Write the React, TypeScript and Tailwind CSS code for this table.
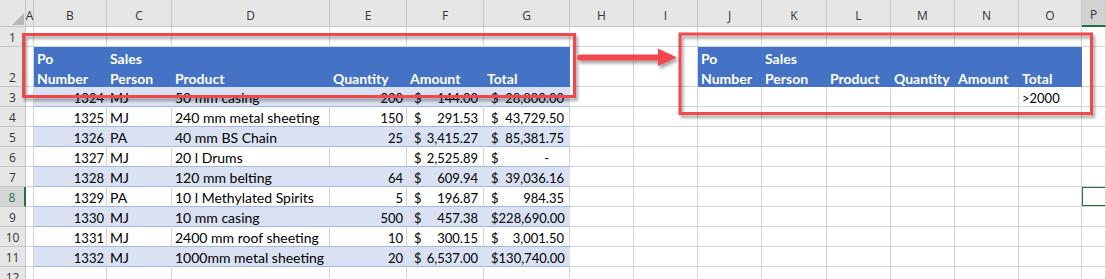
import React from "react";

// Spreadsheet columns (row-header column comes first in the grid)
const COLS = ["A", "B", "C", "D", "E", "F", "G", "H", "I", "J", "K", "L", "M", "N", "O", "P"];
const ROWS = [1, 2, 3, 4, 5, 6, 7, 8, 9, 10, 11, 12];

type Order = {
  po: number;
  rep: string;
  product: string;
  qty: number | null;
  amount: string;
  total: string | null;
};

const orders: Order[] = [
  { po: 1324, rep: "MJ", product: "50 mm casing", qty: 200, amount: "144.00", total: "28,800.00" },
  { po: 1325, rep: "MJ", product: "240 mm metal sheeting", qty: 150, amount: "291.53", total: "43,729.50" },
  { po: 1326, rep: "PA", product: "40 mm BS Chain", qty: 25, amount: "3,415.27", total: "85,381.75" },
  { po: 1327, rep: "MJ", product: "20 l Drums", qty: null, amount: "2,525.89", total: null },
  { po: 1328, rep: "MJ", product: "120 mm belting", qty: 64, amount: "609.94", total: "39,036.16" },
  { po: 1329, rep: "PA", product: "10 l Methylated Spirits", qty: 5, amount: "196.87", total: "984.35" },
  { po: 1330, rep: "MJ", product: "10 mm casing", qty: 500, amount: "457.38", total: "228,690.00" },
  { po: 1331, rep: "MJ", product: "2400 mm roof sheeting", qty: 10, amount: "300.15", total: "3,001.50" },
  { po: 1332, rep: "MJ", product: "1000mm metal sheeting", qty: 20, amount: "6,537.00", total: "130,740.00" },
];

const headerLabels = [["Po", "Number"], ["Sales", "Person"], ["Product"], ["Quantity"], ["Amount"], ["Total"]];

function Accounting({ value }: { value: string | null }) {
  return (
    <div className="flex w-full justify-between pl-[7px] pr-[5px] text-[13px]">
      <span>$</span>
      {value ? <span>{value}</span> : <span className="pr-[15px]">-</span>}
    </div>
  );
}

function HeaderText({ lines }: { lines: string[] }) {
  return (
    <div className="flex flex-col justify-end pl-[3px] -mb-[3px]">
      {lines.map((l) => (
        <div key={l} className="leading-[20px]">{l}</div>
      ))}
    </div>
  );
}

function cellContent(row: number, ci: number) {
  // left table B..G = 1..6, right table J..O = 9..14
  if (row === 2 && ci >= 1 && ci <= 6) return <HeaderText lines={headerLabels[ci - 1]} />;
  if (row === 2 && ci >= 9 && ci <= 14) return <HeaderText lines={headerLabels[ci - 9]} />;
  if (row === 3 && ci === 14) return <span className="pl-[3px] text-[13px]">&gt;2000</span>;

  const o = orders[row - 3];
  if (!o || ci < 1 || ci > 6) return null;
  switch (ci) {
    case 1:
      return <span className="w-full text-right pr-[2px] text-[13px]">{o.po}</span>;
    case 2:
      return <span className="pl-[3px]">{o.rep}</span>;
    case 3:
      return <span className="pl-[3px]">{o.product}</span>;
    case 4:
      return <span className="w-full text-right pr-[3px] text-[13px]">{o.qty ?? ""}</span>;
    case 5:
      return <Accounting value={o.amount} />;
    default:
      return <Accounting value={o.total} />;
  }
}

function cellClass(row: number, ci: number) {
  const inLeft = ci >= 1 && ci <= 6;
  const inRight = ci >= 9 && ci <= 14;
  if (row === 2 && (inLeft || inRight)) {
    return "bg-[#4472c4] border-[#4472c4] text-white font-bold";
  }
  if (row >= 3 && row <= 11 && inLeft) {
    const edge = ci === 6 ? "border-r-[#d4d4d4]" : "";
    if (row % 2 === 1) return `bg-[#d9e1f2] border-r-[#d9e1f2] border-b-[#a3b8e0] ${edge}`;
    return "bg-white border-r-[#d4d4d4] border-b-[#a3b8e0]";
  }
  return "bg-white border-[#d4d4d4]";
}

export default function App() {
  return (
    <div className="relative w-[1106px] h-[279px] overflow-hidden bg-white text-[#000] [font-family:Lato,sans-serif] text-[14px]">
      <div className="grid grid-cols-[26px_8px_73px_65px_158px_77px_77px_86px_64px_64px_64px_65px_64px_64px_64px_63px_24px] grid-rows-[27px_20px_40px_repeat(10,20px)]">
        {/* Column header row */}
        <div className="relative bg-[#e6e6e6] border-r border-b border-[#c6c6c6]">
          <svg className="absolute inset-0" width="26" height="27">
            <polygon points="12,25 24,25 24,13" fill="#b8b8b8" />
          </svg>
        </div>
        {COLS.map((c) => (
          <div
            key={c}
            className={`flex items-end justify-center pb-[3px] leading-[14px] border-r [font-family:'Open_Sans',sans-serif] text-[12px] text-[#333] ${
              c === "P"
                ? "bg-[#d2d2d2] border-[#c6c6c6] border-b-2 border-b-[#217346]"
                : "bg-[#e6e6e6] border-b border-[#c6c6c6]"
            }`}
          >
            {c}
          </div>
        ))}

        {/* Body rows */}
        {ROWS.map((r) => (
          <React.Fragment key={r}>
            <div
              className={`flex items-end justify-center leading-[16px] border-b [font-family:'Open_Sans',sans-serif] text-[12px] ${
                r === 8
                  ? "bg-[#d6d6d6] text-[#217346] border-[#c6c6c6] border-r-2 border-r-[#217346]"
                  : "bg-[#e6e6e6] text-[#333] border-r border-[#c6c6c6]"
              }`}
            >
              {r}
            </div>
            {COLS.map((c, ci) => (
              <div
                key={c}
                className={`relative flex items-end overflow-hidden whitespace-nowrap leading-[16px] border-r border-b ${cellClass(r, ci)}`}
              >
                {cellContent(r, ci)}
                {r === 8 && c === "P" && (
                  <div className="absolute -left-[1px] -top-[1px] -bottom-[1px] -right-[2px] border-2 border-[#217346]" />
                )}
              </div>
            ))}
          </React.Fragment>
        ))}
      </div>

      {/* Callout boxes and arrow drawn over the sheet */}
      <svg className="absolute inset-0 pointer-events-none" width="1106" height="279">
        <defs>
          <filter id="shade" x="-10%" y="-10%" width="120%" height="140%">
            <feDropShadow dx="2" dy="3" stdDeviation="1.6" floodColor="#000" floodOpacity="0.35" />
          </filter>
        </defs>
        <g filter="url(#shade)" fill="none" stroke="#f2464b" strokeWidth="3">
          <rect x="23.5" y="34.5" width="551" height="62" />
          <rect x="680" y="34" width="411.5" height="79.5" />
        </g>
        <g filter="url(#shade)">
          <line x1="580" y1="57.5" x2="661" y2="57.5" stroke="#f2464b" strokeWidth="6" strokeLinecap="round" />
          <polygon points="658,48.5 677,57.5 658,66" fill="#f2464b" />
        </g>
      </svg>
    </div>
  );
}
